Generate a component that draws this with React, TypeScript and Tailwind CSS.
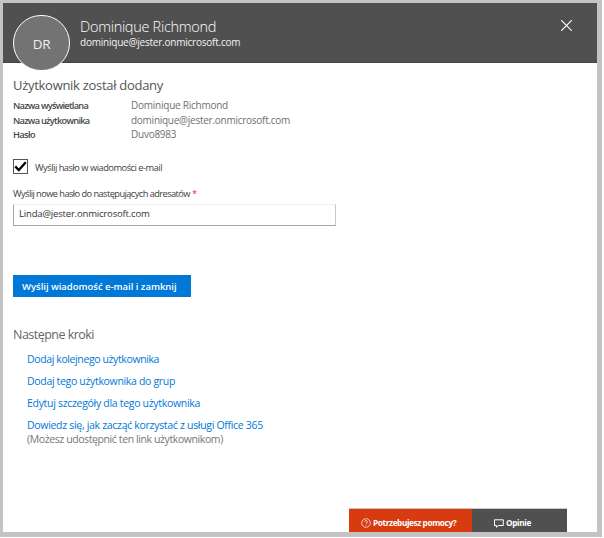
const details = [
  { label: 'Nazwa wyświetlana', value: 'Dominique Richmond', row: 'h-[15px] leading-[15px]', lt: 'tracking-[-0.74px]', vt: 'tracking-[-0.24px]' },
  { label: 'Nazwa użytkownika', value: 'dominique@jester.onmicrosoft.com', row: 'h-[15px] leading-[15px]', lt: 'tracking-[-0.73px]', vt: 'tracking-[-0.26px]' },
  { label: 'Hasło', value: 'Duvo8983', row: 'h-[14px] leading-[13px]', lt: 'tracking-[-0.6px]', vt: 'tracking-[-0.25px]' },
];

const links = [
  { text: 'Dodaj kolejnego użytkownika', cls: 'h-[22px] leading-[22px] tracking-[-0.385px]' },
  { text: 'Dodaj tego użytkownika do grup', cls: 'h-[22px] leading-[22px] tracking-[-0.327px]' },
  { text: 'Edytuj szczegóły dla tego użytkownika', cls: 'h-[22px] leading-[22px] tracking-[-0.305px]' },
  { text: 'Dowiedz się, jak zacząć korzystać z usługi Office 365', cls: 'mt-1 h-[14px] leading-[14px] tracking-[-0.306px]' },
];

function Header() {
  return (
    <header className="flex h-[60px] shrink-0 items-start border-b border-[#444] bg-[#505050] pl-[10px] text-white">
      <div className="mt-3 flex h-14 w-[57px] shrink-0 items-center justify-center rounded-full border-[1.5px] border-white bg-[#737373] pt-[2px] text-[13.5px] tracking-[-0.2px] text-[#eee]">
        DR
      </div>
      <div className="ml-[10px] mt-[13px] grow">
        <h1 className="h-5 text-[14.5px] font-light leading-[21px] tracking-[-0.3px]">Dominique Richmond</h1>
        <p className="h-[13px] text-[10px] leading-[13px] tracking-[-0.22px] text-[#f2f2f2]">dominique@jester.onmicrosoft.com</p>
      </div>
      <button aria-label="Zamknij" className="mr-[25px] mt-[17px]">
        <svg className="block" width="11" height="11" viewBox="0 0 11 11" fill="none" stroke="white" strokeWidth="1.1">
          <path d="M0.2 0.2L10.8 10.8M10.8 0.2L0.2 10.8" />
        </svg>
      </button>
    </header>
  );
}

export default function App() {
  return (
    <div className="h-[538px] w-[604px] bg-white pb-px pr-[2px] font-['Open_Sans','Noto_Sans',sans-serif]">
      <div className="flex h-[537px] flex-col whitespace-nowrap border-b-[5px] border-l-[3px] border-r-[5px] border-t-[3px] border-[#c3c3c3] bg-white">
        <Header />
        <main className="pl-[10px]">
          <h2 className="mt-3 h-5 text-[13px] leading-5 tracking-[-0.29px] text-[#555]">Użytkownik został dodany</h2>
          <dl className="mt-[3px]">
            {details.map((d) => (
              <div key={d.label} className={`flex ${d.row}`}>
                <dt className={`w-[118px] text-[9.25px] font-semibold text-[#484848] ${d.lt}`}>{d.label}</dt>
                <dd className={`text-[10px] text-[#707070] ${d.vt}`}>{d.value}</dd>
              </div>
            ))}
          </dl>

          <label className="mt-[17px] flex h-[17px] items-start">
            <span className="flex size-[15px] items-center justify-center border border-[#555] bg-white">
              <svg width="13" height="13" viewBox="0 0 13 13" fill="none" stroke="black" strokeWidth="2.3">
                <path d="M1.2 6.4L4.8 10L11.8 2.3" />
              </svg>
            </span>
            <span className="ml-[7px] text-[9.25px] leading-[17px] tracking-[-0.475px] text-[#404040]">Wyślij hasło w wiadomości e-mail</span>
          </label>

          <div className="mt-[10px] h-4 text-[9.25px] leading-4 tracking-[-0.56px] text-[#404040]">
            Wyślij nowe hasło do następujących adresatów<span className="ml-[2px] text-[#e03030]">*</span>
          </div>
          <div className="mt-[2px] h-[22px] w-[323px] border border-b-[#a0a8a8] border-l-[#a8a8a8] border-r-[#c8c8c8] border-t-[#eee] pl-[5px] text-[9.5px] leading-[18px] tracking-[-0.17px] text-[#333]">
            Linda@jester.onmicrosoft.com
          </div>

          <button className="mt-[49px] block h-[22px] w-[178px] bg-[#0078d7] pl-[9px] text-left text-[9.5px] font-semibold leading-[23px] tracking-[-0.02px] text-white">
            Wyślij wiadomość e-mail i zamknij
          </button>

          <h3 className="mt-[28px] h-5 text-[12.5px] leading-5 tracking-[-0.52px] text-[#666]">Następne kroki</h3>
          <ul className="ml-[14px] mt-[3px] text-[10.5px] text-[#0078d7]">
            {links.map((l) => (
              <li key={l.text} className={l.cls}>{l.text}</li>
            ))}
            <li className="h-[14px] leading-[14px] tracking-[-0.4px] text-[#777]">(Możesz udostępnić ten link użytkownikom)</li>
          </ul>
        </main>

        <footer className="ml-[346px] mt-auto flex h-6 w-[218px] border-t border-[#c8c8c8] text-[8.5px] font-bold text-white">
          <div className="flex h-full w-[123px] items-center bg-[#d83b10] pl-3 pt-[5px]">
            <svg width="10" height="10" viewBox="0 0 10 10" fill="none" stroke="white" strokeWidth="0.7">
              <circle cx="5" cy="5" r="4.3" />
              <path d="M3.6 3.9C3.6 2.1 6.5 2.2 6.4 3.9C6.4 4.9 5 4.9 5 6.1M5 6.9V7.7" />
            </svg>
            <span className="ml-[2px] text-[8.25px] tracking-[-0.4px]">Potrzebujesz pomocy?</span>
          </div>
          <div className="flex h-full w-[95px] items-center bg-[#505050] pl-[22px] pt-[5px]">
            <svg width="10" height="9" viewBox="0 0 10 9" fill="none" stroke="white" strokeWidth="1">
              <path d="M0.5 0.8H9.3V6.5H4.3L2.4 8.3V6.5H0.5Z" />
            </svg>
            <span className="ml-[2px] text-[8.25px] tracking-[-0.35px]">Opinie</span>
          </div>
        </footer>
      </div>
    </div>
  );
}
